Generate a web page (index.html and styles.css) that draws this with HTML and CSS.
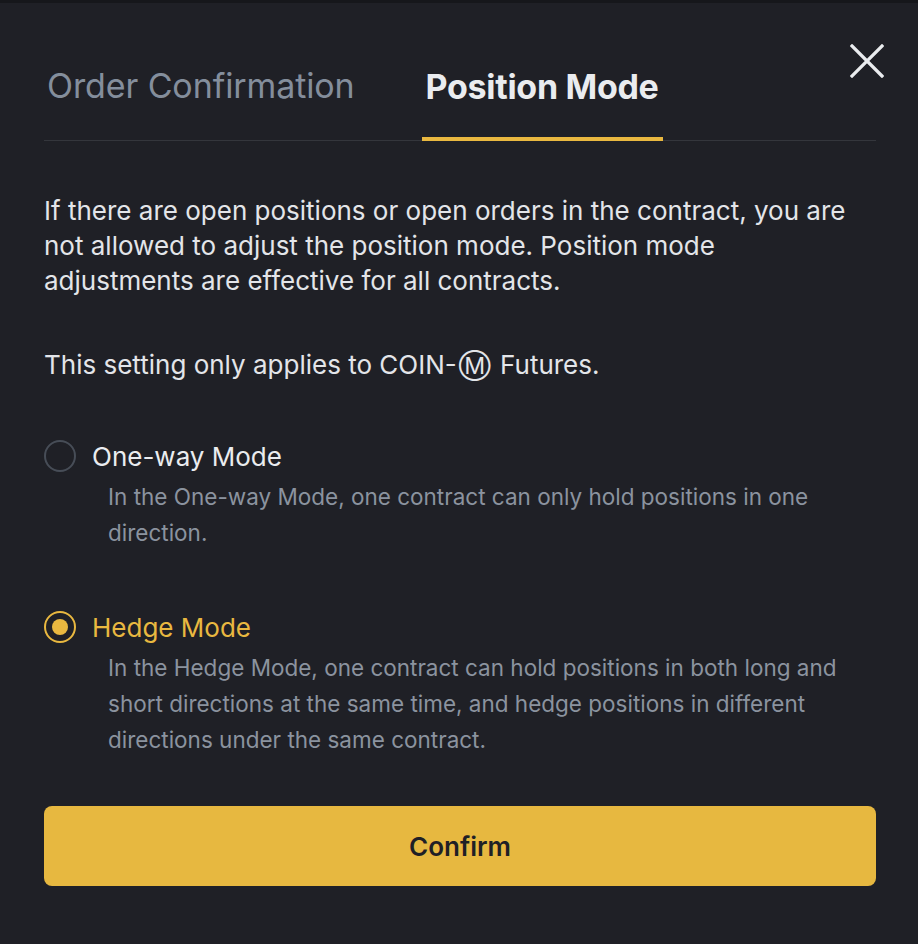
FILE: index.html
```html
<!DOCTYPE html>
<html lang="en">
<head>
<meta charset="utf-8">
<link rel="stylesheet" href="styles.css">
</head>
<body>
<div class="topstrip"></div>
<div class="modal">
  <button class="close" aria-label="Close">
    <svg width="34" height="34" viewBox="0 0 34 34"><path d="M2 2 L32 32 M32 2 L2 32" stroke="#eaecef" stroke-width="3.2" stroke-linecap="square"/></svg>
  </button>
  <div class="tabs">
    <div class="tab">Order Confirmation</div>
    <div class="tab active">Position Mode</div>
  </div>
  <p class="text first">If there are open positions or open orders in the contract, you are not allowed to adjust the position mode. Position mode adjustments are effective for all contracts.</p>
  <p class="text second">This setting only applies to COIN-<span class="coin-m">Ⓜ</span> Futures.</p>
  <div class="option">
    <div class="opt-head"><span class="radio"></span><span class="label">One-way Mode</span></div>
    <div class="desc">In the One-way Mode, one contract can only hold positions in one direction.</div>
  </div>
  <div class="option selected">
    <div class="opt-head"><span class="radio"></span><span class="label">Hedge Mode</span></div>
    <div class="desc">In the Hedge Mode, one contract can hold positions in both long and short directions at the same time, and hedge positions in different directions under the same contract.</div>
  </div>
  <button class="confirm">Confirm</button>
</div>
</body>
</html>
```
FILE: styles.css
```css
* { box-sizing: border-box; }
html, body { margin: 0; padding: 0; background: #1f2026; }
body { font-family: Inter, "Noto Sans", sans-serif; color: #eaecef; width: 918px; height: 944px; overflow: hidden; }
.topstrip { height: 3px; background: #16171b; }
.modal { position: relative; padding: 0 42px 0 44px; }
.close { position: absolute; right: 34px; top: 41px; background: none; border: 0; padding: 0; width: 34px; height: 34px; }
.tabs { display: flex; gap: 64px; border-bottom: 1px solid #34363c; height: 138px; align-items: flex-end; }
.tab { font-size: 34px; color: #848e9c; padding: 0 3px; height: 71px; line-height: 1; letter-spacing: -0.1px; }
.tab.active { color: #eaecef; font-weight: 700; padding: 0 4px; letter-spacing: -0.3px; border-bottom: 4px solid #e9b840; margin-bottom: -1px; }
.text { margin: 0; font-size: 26px; line-height: 35px; color: #e3e5e9; }
.text.first { margin-top: 52px; max-width: 818px; }
.text.second { margin-top: 49px; height: 35px; }
.coin-m { font-size: 23px; line-height: 1; margin: 0 2px; }
.option { margin-top: 54px; }
.option + .option { margin-top: 56px; }
.opt-head { display: flex; align-items: center; gap: 16px; height: 40px; }
.radio { width: 32px; height: 32px; border-radius: 50%; border: 2px solid #474d57; flex: none; position: relative; }
.selected .radio { border-color: #e9b840; }
.selected .radio::after { content: ""; position: absolute; left: 6px; top: 6px; width: 16px; height: 16px; border-radius: 50%; background: #e9b840; }
.label { font-size: 26px; color: #eaecef; }
.selected .label { color: #e9b840; }
.desc { padding-left: 64px; font-size: 22.5px; line-height: 36px; color: #8b939f; margin-top: 3px; }
.confirm { display: block; width: 832px; height: 80px; margin-top: 48px; background: #e7b840; border: 0; border-radius: 8px; font-family: inherit; font-size: 26px; font-weight: 600; color: #1f2026; }
```
